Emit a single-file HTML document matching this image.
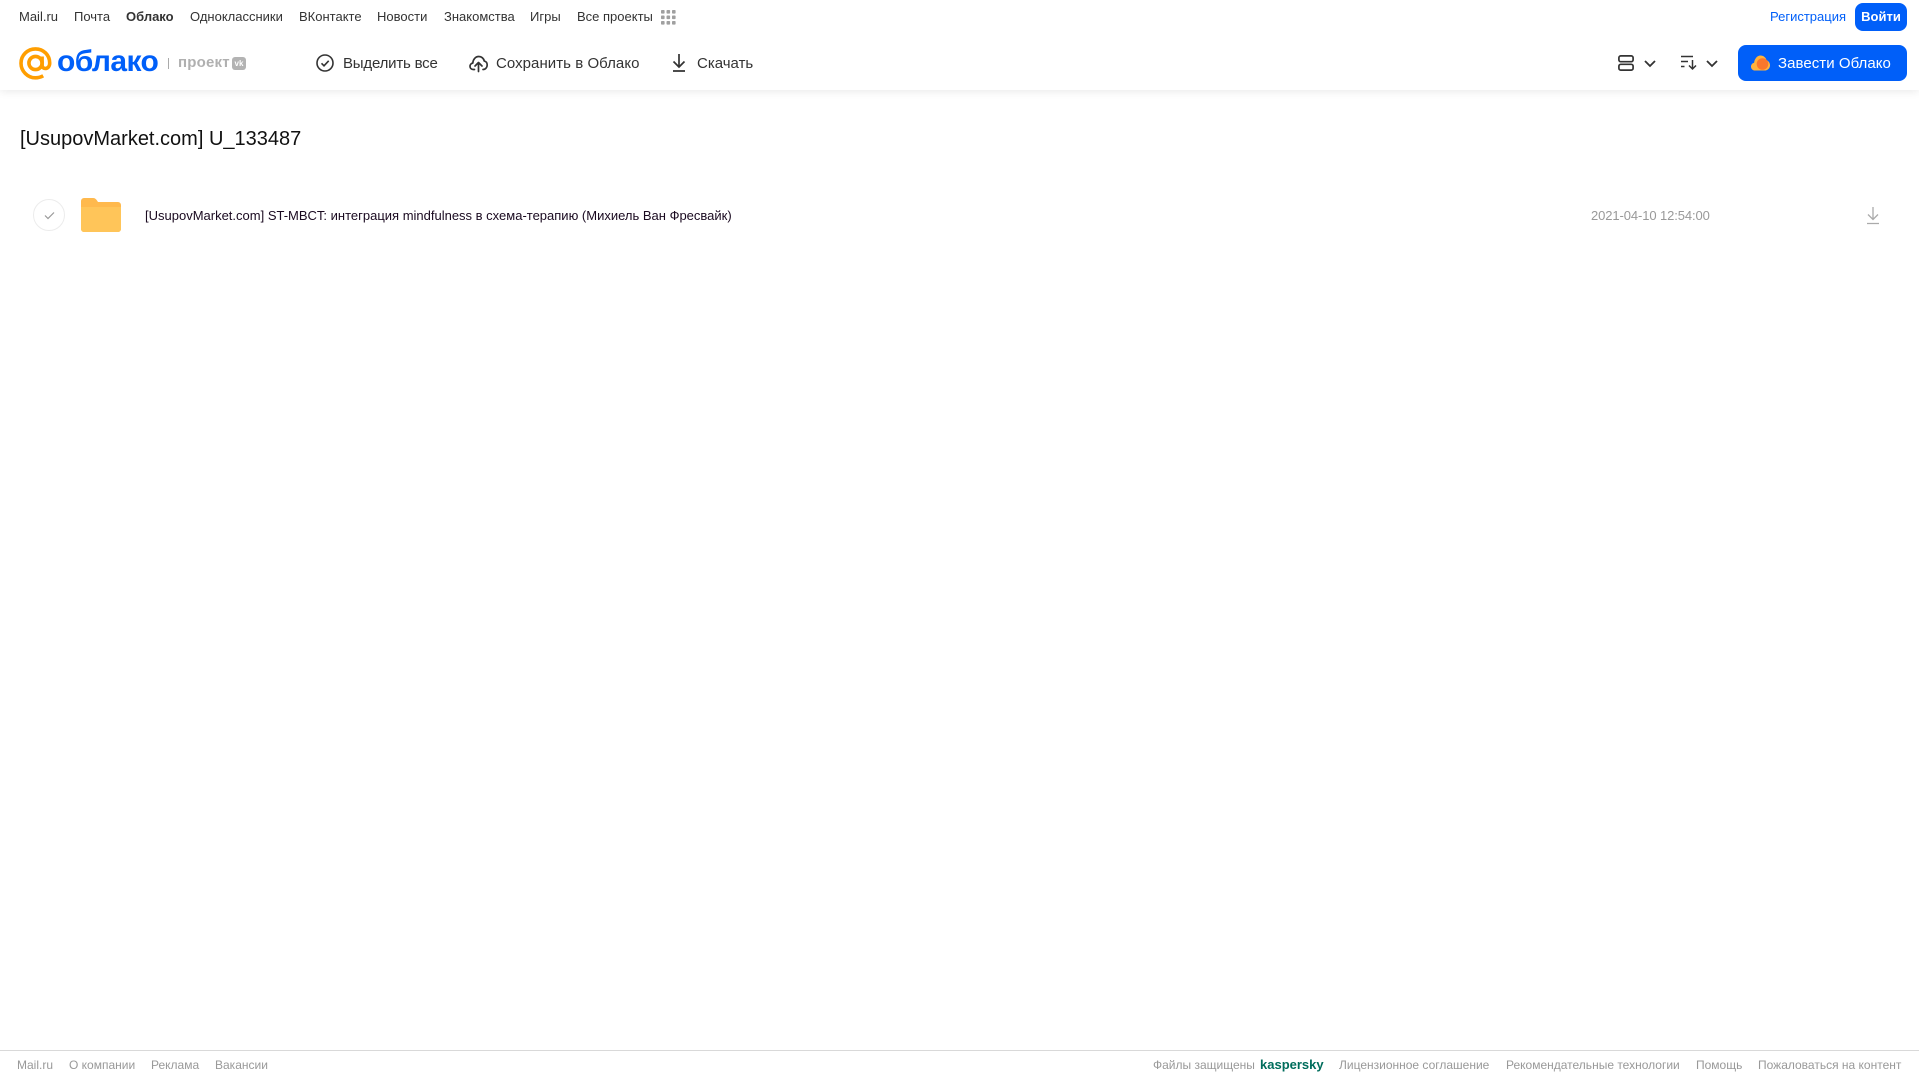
<!DOCTYPE html>
<html lang="ru"><head><meta charset="utf-8"><title>Облако</title>
<style>
html,body{margin:0;padding:0;background:#fff;width:1919px;height:1079px;overflow:hidden;font-family:"Liberation Sans",sans-serif}
.t{position:absolute;white-space:nowrap;line-height:20px}
.n{font-size:13px;color:#333;top:7px}
.b{font-size:15px;color:#333;top:53.500px}
.f{font-size:12px;color:#999;top:1055px}
svg{position:absolute;overflow:visible}
</style></head><body>
<div style="position:absolute;left:0;top:0;width:1919px;height:90px;background:#fff;box-shadow:0 2px 8px rgba(0,0,0,.08)"></div>

<span class="t n" style="left:19px">Mail.ru</span>
<span class="t n" style="left:74px">Почта</span>
<span class="t n" style="left:126px;font-weight:bold">Облако</span>
<span class="t n" style="left:190px">Одноклассники</span>
<span class="t n" style="left:299px">ВКонтакте</span>
<span class="t n" style="left:377px">Новости</span>
<span class="t n" style="left:444px">Знакомства</span>
<span class="t n" style="left:530px">Игры</span>
<span class="t n" style="left:577px">Все проекты</span>
<svg style="left:661px;top:10px" width="15" height="15" fill="#a0a0a0"><rect width="3.6" height="3.6" rx=".8"/><rect x="5.5" width="3.6" height="3.6" rx=".8"/><rect x="11" width="3.6" height="3.6" rx=".8"/><rect y="5.5" width="3.6" height="3.6" rx=".8"/><rect x="5.5" y="5.5" width="3.6" height="3.6" rx=".8"/><rect x="11" y="5.5" width="3.6" height="3.6" rx=".8"/><rect y="11" width="3.6" height="3.6" rx=".8"/><rect x="5.5" y="11" width="3.6" height="3.6" rx=".8"/><rect x="11" y="11" width="3.6" height="3.6" rx=".8"/></svg>

<svg style="left:19px;top:47px" width="33" height="33" fill="none" stroke="#ff9e00" stroke-width="3.6"><circle cx="16.5" cy="16" r="6.6"/><path d="M23.1 9.5v8.6c0 5 7.6 4.6 7.6-2.1C30.700 8 24.500 1.900 16.500 1.900 8.500 1.900 2 8.300 2 16.200s6.500 14.600 14.500 14.600c3 0 5.300-.7 7.700-2"/></svg>
<span class="t" style="left:57px;top:46px;font-size:30px;line-height:32px;font-weight:bold;color:#005ff9;letter-spacing:-.6px">облако</span>
<div style="position:absolute;left:168px;top:58px;width:1px;height:11px;background:#aaa"></div>
<span class="t" style="left:178px;top:53px;font-size:15px;font-weight:bold;color:#b0b0b0;letter-spacing:.2px">проект</span>
<div style="position:absolute;left:232px;top:57px;width:14px;height:13px;border-radius:3px;background:#b3b3b3;color:#fff;font-size:8px;font-weight:bold;line-height:13px;text-align:center">vk</div>

<svg style="left:316px;top:54px" width="18" height="18" fill="none" stroke="#333" stroke-width="1.6"><circle cx="9" cy="9" r="8"/><path d="M5.500 9.300l2.500 2.500 4.700-5"/></svg>
<span class="t b" style="left:343px;letter-spacing:-.2px">Выделить все</span>
<svg style="left:469px;top:55px" width="19" height="17" fill="none" stroke="#333" stroke-width="1.700" stroke-linejoin="round" stroke-linecap="round"><path d="M5.500 14.500H4.300C2.300 14.500 1 13 1 11.300c0-1.700 1.200-3 2.800-3.200C4 4.500 6.500 1.500 9.800 1.500c2.800 0 5 2 5.500 4.600 1.800.4 2.900 2 2.900 3.900 0 2.500-1.800 4.500-4.200 4.500"/><path d="M9.500 16.500V8M6 11l3.500-3.500L13 11"/></svg>
<span class="t b" style="left:496px;letter-spacing:.05px">Сохранить в Облако</span>
<svg style="left:672px;top:54px" width="14" height="18" fill="none" stroke="#333" stroke-width="1.700"><path d="M7 0v12.500M1.500 7.500L7 13l5.500-5.500M1 17h12"/></svg>
<span class="t b" style="left:697px">Скачать</span>

<span class="t n" style="left:1770px;color:#005ff9">Регистрация</span>
<div style="position:absolute;left:1855px;top:3px;width:52px;height:28px;border-radius:8px;background:#005ff9;color:#fff;font-size:13px;font-weight:bold;line-height:28px;text-align:center">Войти</div>

<svg style="left:1618px;top:55px" width="16" height="16" fill="none" stroke="#333" stroke-width="1.700"><rect x=".9" y=".9" width="14.200" height="5.800" rx="1.800"/><rect x=".9" y="9.300" width="14.200" height="5.800" rx="1.800"/></svg>
<svg style="left:1644px;top:60px" width="12" height="7" fill="none" stroke="#333" stroke-width="1.800"><path d="M1 1l5 5 5-5"/></svg>
<svg style="left:1681px;top:55px" width="16" height="15" fill="none" stroke="#333" stroke-width="1.500"><path d="M0 1.500h12M0 6.500h7M0 11.500h3.500M11.500 5v9M8 10.500l3.500 3.500 3.500-3.500"/></svg>
<svg style="left:1706px;top:60px" width="12" height="7" fill="none" stroke="#333" stroke-width="1.800"><path d="M1 1l5 5 5-5"/></svg>

<div style="position:absolute;left:1738px;top:45px;width:169px;height:36px;border-radius:8px;background:#005ff9"></div>
<svg style="left:1751px;top:55px" width="19" height="16"><path d="M4 15.500C1.700 15.500 0 13.800 0 11.600c0-1.900 1.300-3.400 3.100-3.800C3.500 4 6 .5 9.500.5c3 0 5.300 2 6 4.600 2 .7 3.500 2.800 3.500 5.100 0 3-2.400 5.300-5.300 5.300z" fill="#ffb33c"/><circle cx="11.500" cy="9" r="5.800" fill="#f9772c"/></svg>
<span class="t" style="left:1778px;top:53.500px;font-size:15px;color:#fff;letter-spacing:.05px">Завести Облако</span>

<span class="t" style="left:20px;top:126.500px;font-size:20px;line-height:24px;color:#111">[UsupovMarket.com] U_133487</span>

<div style="position:absolute;left:33px;top:199px;width:30px;height:30px;border:1px solid #ececec;border-radius:50%"></div>
<svg style="left:44px;top:211px" width="11" height="9" fill="none" stroke="#999" stroke-width="1.200"><path d="M1 4.500l3 3 6-6"/></svg>
<svg style="left:81px;top:198px" width="40" height="34"><path d="M0 3a3 3 0 0 1 3-3h9c2 0 3 1 4 2.500l1 1.500h20a3 3 0 0 1 3 3v24a3 3 0 0 1-3 3H3a3 3 0 0 1-3-3z" fill="#ffb94d"/><path d="M0 9h40v22a3 3 0 0 1-3 3H3a3 3 0 0 1-3-3z" fill="#ffc559"/></svg>
<span class="t" style="left:145px;top:205.500px;font-size:13px;color:#1a0a20">[UsupovMarket.com] ST-MBCT: интеграция mindfulness в схема-терапию (Михиель Ван Фресвайк)</span>
<span class="t" style="left:1591px;top:205.500px;font-size:13px;color:#999;letter-spacing:-.1px">2021-04-10 12:54:00</span>
<svg style="left:1866px;top:207px" width="14" height="18" fill="none" stroke="#aaa" stroke-width="1.300"><path d="M7 0v12.500M2 7.500L7 12.500l5-5M1 16.500h12"/></svg>

<div style="position:absolute;left:0;top:1050px;width:1919px;height:1px;background:#d9d9d9"></div>
<span class="t f" style="left:17px">Mail.ru</span>
<span class="t f" style="left:69px">О компании</span>
<span class="t f" style="left:151px">Реклама</span>
<span class="t f" style="left:215px">Вакансии</span>
<span class="t f" style="left:1153px">Файлы защищены</span>
<span class="t f" style="left:1260px;font-size:13px;font-weight:bold;color:#006d5c">kaspersky</span>
<span class="t f" style="left:1339px">Лицензионное соглашение</span>
<span class="t f" style="left:1506px">Рекомендательные технологии</span>
<span class="t f" style="left:1696px">Помощь</span>
<span class="t f" style="left:1758px">Пожаловаться на контент</span>
</body></html>
